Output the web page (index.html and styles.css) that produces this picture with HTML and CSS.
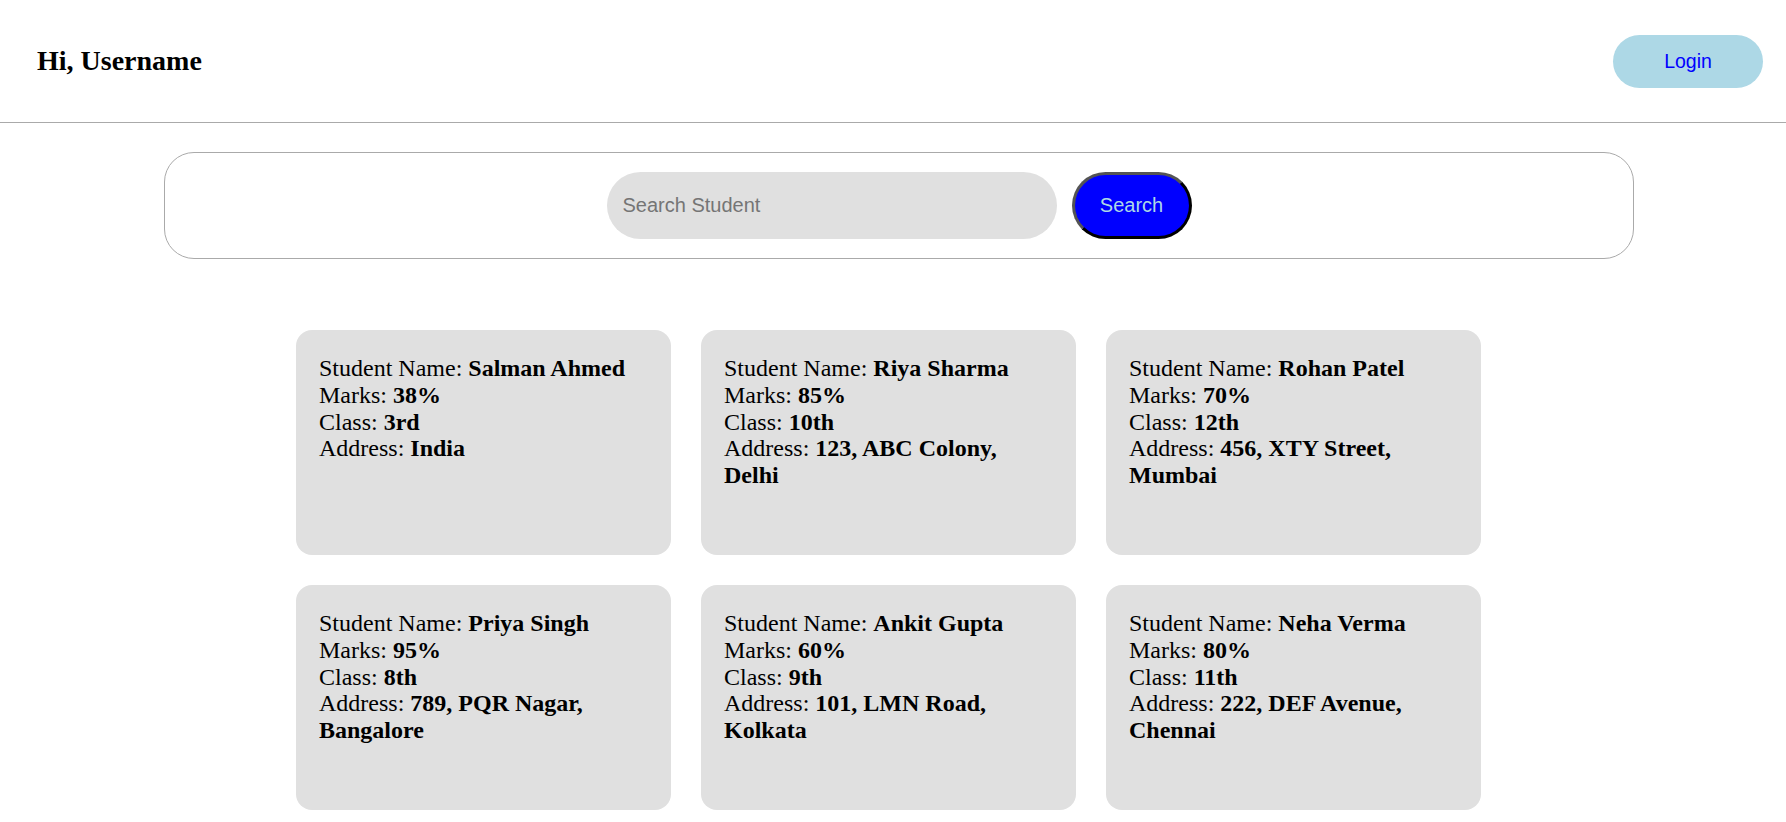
FILE: index.html
```html
<!DOCTYPE html>
<html lang="en">
<head>
<meta charset="utf-8">
<title>Students</title>
<link rel="stylesheet" href="styles.css">
</head>
<body>
<header class="topbar">
  <h2 class="greeting">Hi, Username</h2>
  <button class="login-btn">Login</button>
</header>
<section class="search-box">
  <input class="search-input" type="text" placeholder="Search Student">
  <button class="search-btn">Search</button>
</section>
<main class="cards">
  <div class="card">
    <div>Student Name: <b>Salman Ahmed</b></div>
    <div>Marks: <b>38%</b></div>
    <div>Class: <b>3rd</b></div>
    <div>Address: <b>India</b></div>
  </div>
  <div class="card">
    <div>Student Name: <b>Riya Sharma</b></div>
    <div>Marks: <b>85%</b></div>
    <div>Class: <b>10th</b></div>
    <div>Address: <b>123, ABC Colony, Delhi</b></div>
  </div>
  <div class="card">
    <div>Student Name: <b>Rohan Patel</b></div>
    <div>Marks: <b>70%</b></div>
    <div>Class: <b>12th</b></div>
    <div>Address: <b>456, XTY Street, Mumbai</b></div>
  </div>
  <div class="card">
    <div>Student Name: <b>Priya Singh</b></div>
    <div>Marks: <b>95%</b></div>
    <div>Class: <b>8th</b></div>
    <div>Address: <b>789, PQR Nagar, Bangalore</b></div>
  </div>
  <div class="card">
    <div>Student Name: <b>Ankit Gupta</b></div>
    <div>Marks: <b>60%</b></div>
    <div>Class: <b>9th</b></div>
    <div>Address: <b>101, LMN Road, Kolkata</b></div>
  </div>
  <div class="card">
    <div>Student Name: <b>Neha Verma</b></div>
    <div>Marks: <b>80%</b></div>
    <div>Class: <b>11th</b></div>
    <div>Address: <b>222, DEF Avenue, Chennai</b></div>
  </div>
</main>
</body>
</html>
```
FILE: styles.css
```css
html, body {
  margin: 0;
  padding: 0;
  background: #ffffff;
  font-family: "Liberation Serif", "Times New Roman", serif;
  color: #000;
}

.topbar {
  display: flex;
  justify-content: space-between;
  align-items: center;
  height: 123px;
  box-sizing: border-box;
  padding: 0 23px 0 37px;
  border-bottom: 1px solid #aaaaaa;
}

.greeting {
  margin: 0;
  font-size: 28px;
  font-weight: bold;
}

.login-btn {
  width: 150px;
  height: 53px;
  border: none;
  border-radius: 27px;
  background: #add8e6;
  color: #0000ff;
  font-family: "Liberation Sans", Arial, sans-serif;
  font-size: 19.5px;
  cursor: pointer;
}

.search-box {
  display: flex;
  justify-content: center;
  align-items: center;
  gap: 15px;
  margin: 29px 152px 0 164px;
  padding: 19px;
  border: 1px solid #aaaaaa;
  border-radius: 30px;
}

.search-input {
  width: 450px;
  height: 67px;
  box-sizing: border-box;
  border: none;
  border-radius: 34px;
  background: #e0e0e0;
  padding: 0 16px;
  font-family: "Liberation Sans", Arial, sans-serif;
  font-size: 20px;
  outline: none;
}

.search-input::placeholder {
  color: #757575;
}

.search-btn {
  width: 120px;
  height: 67px;
  box-sizing: border-box;
  border: 3px outset #000;
  border-radius: 34px;
  background: #0000ff;
  color: #add8e6;
  font-family: "Liberation Sans", Arial, sans-serif;
  font-size: 20px;
  cursor: pointer;
}

.cards {
  display: grid;
  grid-template-columns: repeat(3, 375px);
  gap: 30px;
  margin: 71px 0 0 296px;
}

.card {
  height: 225px;
  box-sizing: border-box;
  padding: 25px 23px 23px;
  border-radius: 16px;
  background: #e0e0e0;
  font-size: 24px;
  line-height: 26.8px;
}
```
